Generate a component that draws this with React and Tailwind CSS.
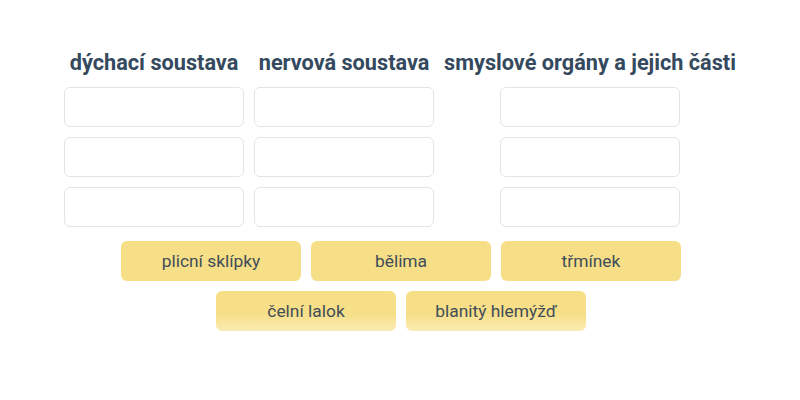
import React from "react";

const columns = [
  { title: "dýchací soustava", width: "w-[180px]" },
  { title: "nervová soustava", width: "w-[180px]" },
  { title: "smyslové orgány a jejich části", width: "w-auto" },
];

const firstRow = ["plicní sklípky", "bělima", "třmínek"];
const secondRow = ["čelní lalok", "blanitý hlemýžď"];

const Slot = () => (
  <div className="w-[180px] h-[40px] rounded-[6px] border border-[#dfe5e9] bg-white" />
);

const Chip = ({ label, fading }) => (
  <div
    className={`w-[180px] h-[40px] rounded-[6px] flex items-center justify-center text-[17.4px] text-[#3f4d5a] ${
      fading
        ? "bg-gradient-to-b from-[#f7df87] from-55% to-[#faebb2]"
        : "bg-[#f7df87]"
    }`}
  >
    {label}
  </div>
);

const App = () => {
  return (
    <div
      className="w-[800px] h-[400px] bg-white flex flex-col items-center pt-[49px]"
      style={{ fontFamily: "Roboto, 'Noto Sans', sans-serif" }}
    >
      <div className="flex gap-[10px]">
        {columns.map((col) => (
          <div key={col.title} className={`${col.width} flex flex-col items-center`}>
            <h2 className="whitespace-nowrap text-[21.7px] leading-[28px] font-bold text-[#34495e]">
              {col.title}
            </h2>
            <div className="mt-[10px] flex flex-col gap-[10px]">
              <Slot />
              <Slot />
              <Slot />
            </div>
          </div>
        ))}
      </div>

      <div className="mt-[14px] pl-[2px] flex flex-col items-center gap-[10px]">
        <div className="flex gap-[10px]">
          {firstRow.map((label) => (
            <Chip key={label} label={label} />
          ))}
        </div>
        <div className="flex gap-[10px]">
          {secondRow.map((label) => (
            <Chip key={label} label={label} fading />
          ))}
        </div>
      </div>
    </div>
  );
};

export default App;
